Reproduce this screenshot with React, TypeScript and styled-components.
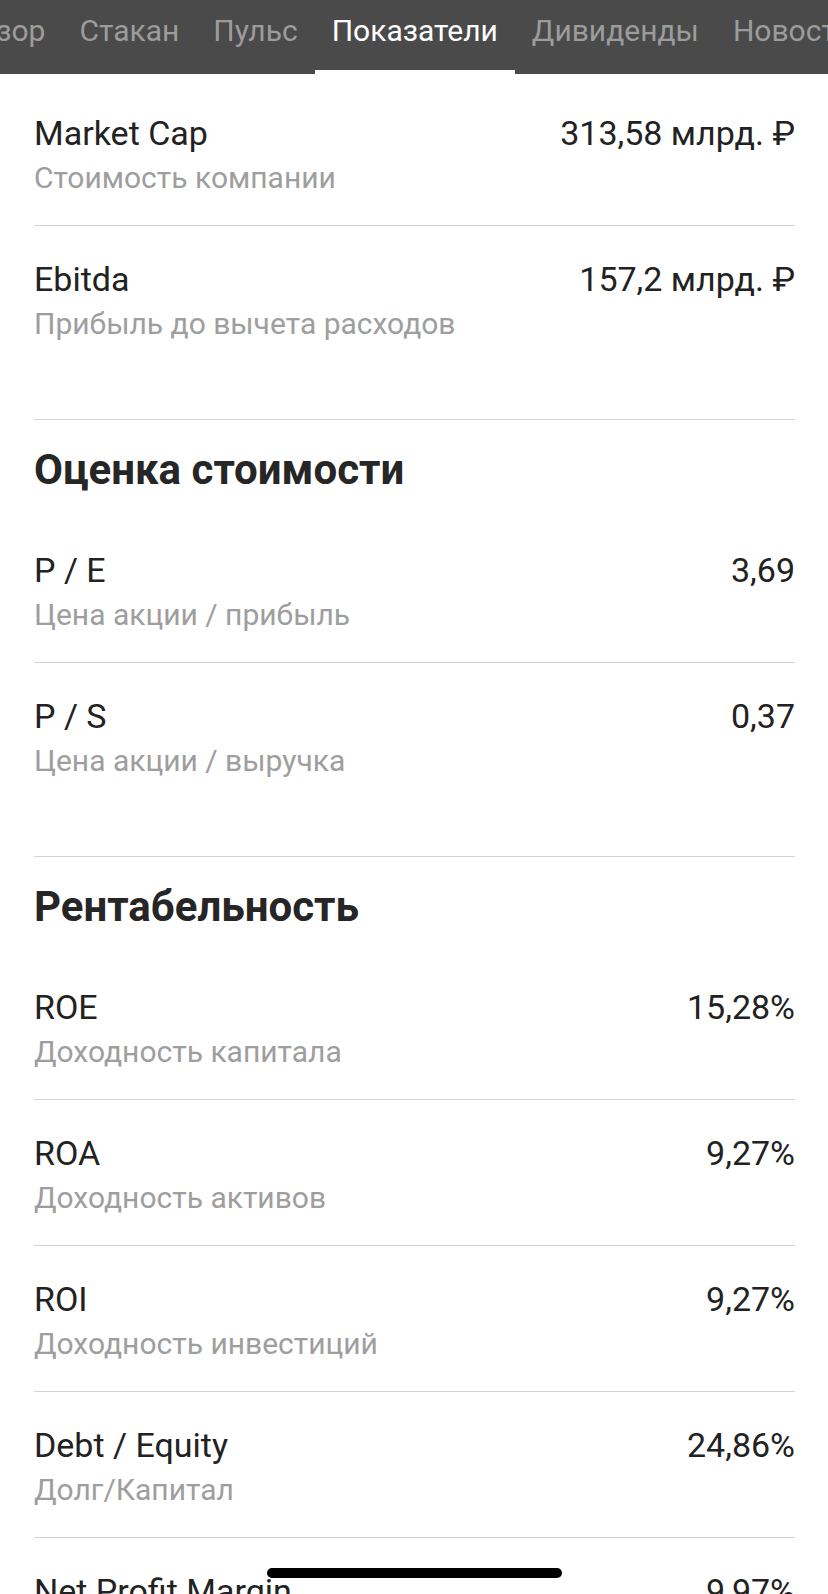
import React from "react";
import styled, { createGlobalStyle } from "styled-components";

const GlobalStyle = createGlobalStyle`
  html, body {
    margin: 0;
    padding: 0;
    background: #ffffff;
    overflow: hidden;
  }
  body {
    font-family: Roboto, "Liberation Sans", sans-serif;
    -webkit-font-smoothing: antialiased;
  }
`;

const Screen = styled.div`
  width: 828px;
  min-height: 1594px;
  background: #ffffff;
`;

const TabBar = styled.nav`
  height: 74px;
  background: #4a4a4a;
  overflow: hidden;
  display: flex;
`;

const TabTrack = styled.div<{ $offset: number }>`
  display: flex;
  flex-shrink: 0;
  margin-left: ${(p) => -p.$offset}px;
`;

const Tab = styled.div<{ $active?: boolean }>`
  flex-shrink: 0;
  box-sizing: border-box;
  height: 74px;
  padding: 13px 17px 0;
  font-size: 30px;
  line-height: 35px;
  white-space: nowrap;
  color: ${(p) => (p.$active ? "#ffffff" : "#9c9c9c")};
  border-bottom: 4px solid ${(p) => (p.$active ? "#ffffff" : "transparent")};
`;

const Content = styled.main`
  padding: 6px 33px 0 34px;
`;

const Section = styled.section``;

const SectionTitle = styled.h2`
  margin: 0;
  padding: 25px 0 22px;
  font-size: 42px;
  line-height: 50px;
  font-weight: 700;
  color: #262626;
`;

const Row = styled.div<{ $last?: boolean }>`
  display: grid;
  grid-template-columns: 1fr auto;
  row-gap: 10px;
  padding: 34px 0 ${(p) => (p.$last ? 79 : 31)}px;
  border-bottom: 1px solid #d3d3d3;
`;

const Label = styled.div`
  font-size: 34px;
  line-height: 38px;
  color: #222222;
`;

const Value = styled.div`
  font-size: 34px;
  line-height: 38px;
  color: #222222;
  text-align: right;
`;

const Hint = styled.div`
  grid-column: 1 / -1;
  font-size: 30px;
  line-height: 32px;
  color: #9e9e9e;
`;

const HomeIndicator = styled.div`
  position: fixed;
  left: 267px;
  bottom: 16px;
  width: 295px;
  height: 10px;
  border-radius: 5px;
  background: #000000;
`;

type Metric = { label: string; value: string; hint: string };
type Group = { title?: string; items: Metric[] };

const tabs = ["Обзор", "Стакан", "Пульс", "Показатели", "Дивиденды", "Новости"];

const groups: Group[] = [
  {
    items: [
      { label: "Market Cap", value: "313,58 млрд. ₽", hint: "Стоимость компании" },
      { label: "Ebitda", value: "157,2 млрд. ₽", hint: "Прибыль до вычета расходов" },
    ],
  },
  {
    title: "Оценка стоимости",
    items: [
      { label: "P / E", value: "3,69", hint: "Цена акции / прибыль" },
      { label: "P / S", value: "0,37", hint: "Цена акции / выручка" },
    ],
  },
  {
    title: "Рентабельность",
    items: [
      { label: "ROE", value: "15,28%", hint: "Доходность капитала" },
      { label: "ROA", value: "9,27%", hint: "Доходность активов" },
      { label: "ROI", value: "9,27%", hint: "Доходность инвестиций" },
      { label: "Debt / Equity", value: "24,86%", hint: "Долг/Капитал" },
      { label: "Net Profit Margin", value: "9,97%", hint: "Чистая рентабельность" },
    ],
  },
];

export default function App() {
  return (
    <Screen>
      <GlobalStyle />
      <TabBar>
        <TabTrack $offset={58}>
          {tabs.map((t) => (
            <Tab key={t} $active={t === "Показатели"}>
              {t}
            </Tab>
          ))}
        </TabTrack>
      </TabBar>
      <Content>
        {groups.map((g, gi) => (
          <Section key={gi}>
            {g.title && <SectionTitle>{g.title}</SectionTitle>}
            {g.items.map((m, i) => (
              <Row key={m.label} $last={i === g.items.length - 1}>
                <Label>{m.label}</Label>
                <Value>{m.value}</Value>
                <Hint>{m.hint}</Hint>
              </Row>
            ))}
          </Section>
        ))}
      </Content>
      <HomeIndicator />
    </Screen>
  );
}
